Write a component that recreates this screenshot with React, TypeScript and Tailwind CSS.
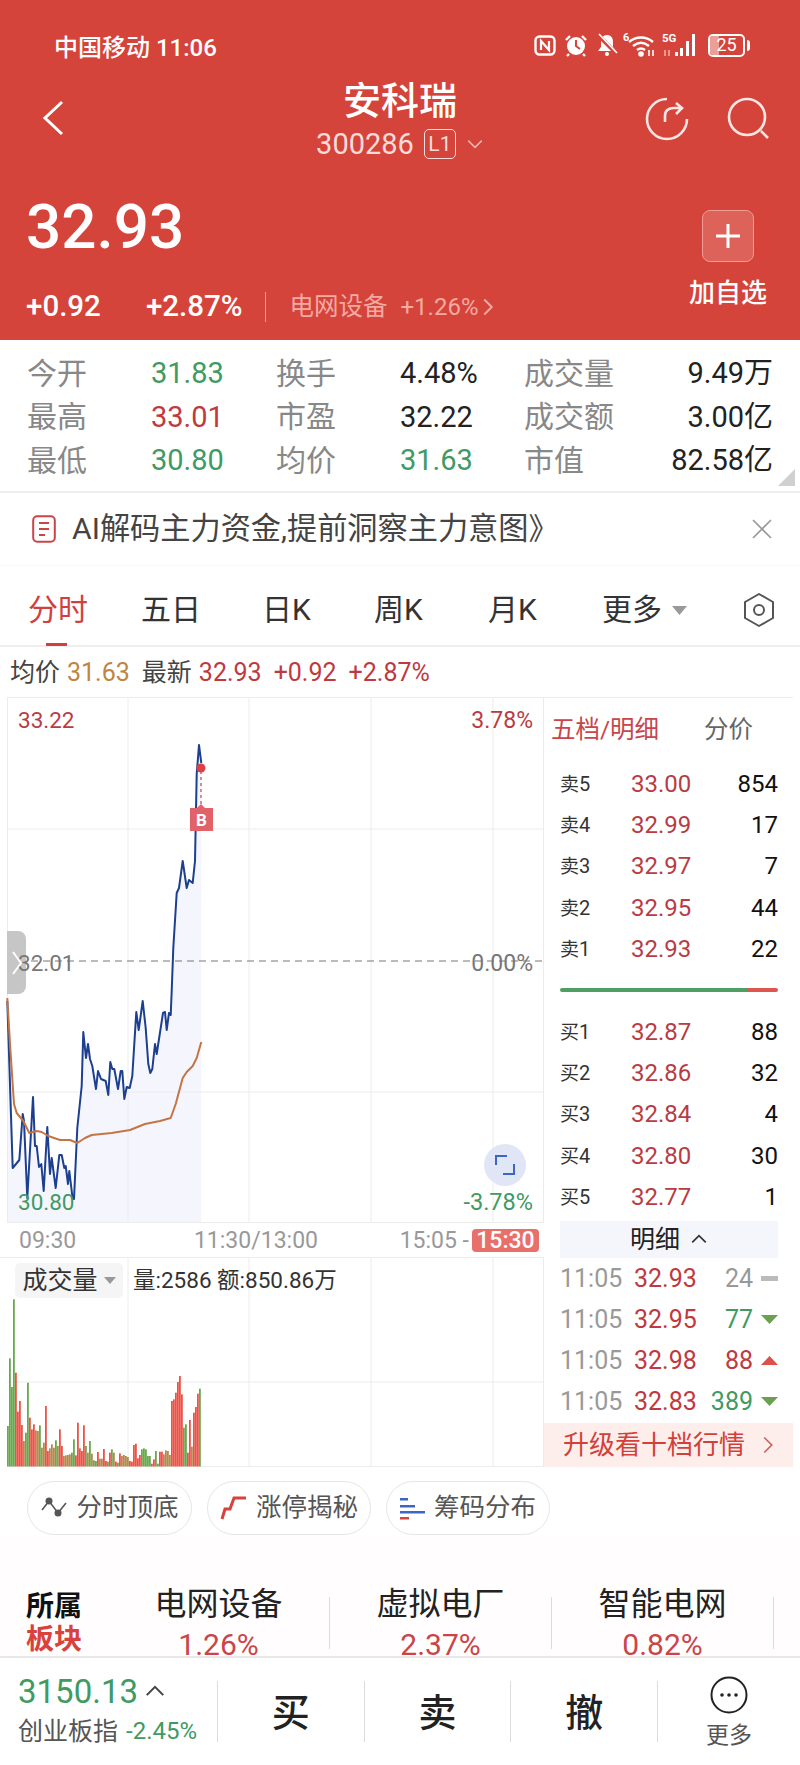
import { FC } from "react";

const blueLine =
  "7.3,1000 12.7,1167 16,1163 19.3,1159 22.7,1113 24,1120 27.3,1197 33,1096 35,1145 36.7,1145 39,1166 41.3,1163 43.7,1190 47.3,1126 50,1173 51.7,1157 55.7,1187 59.3,1154 61.7,1154 64.3,1167 65.7,1165 68,1183 69.3,1170 72.7,1198 74,1198 77.3,1127 81.7,1085 83.3,1031 86,1057 88,1043 90,1058 92.3,1065 96,1088 98,1070 101,1078 105.7,1080 108.3,1094 110.3,1061 112.3,1068 114.3,1068 118,1088 120.7,1070 122.3,1070 124.3,1098 126.7,1086 129.7,1087 132.3,1075 136.3,1011 138.7,1029 142.7,1000 145.7,1027 148.3,1063 150.3,1072 152.3,1068 155,1043 156.7,1053 163,1012 165,1011 166.7,1029 169,1012 170.7,1014 171.7,990 173.3,947 176.7,892 179,887 182.7,860 186.7,887 189,879 192.7,882 195,860 196.7,773 199,744 201.3,762";

const avgLine =
  "7.3,997 10,1043 14,1103 16.7,1112 23.3,1120 29.3,1132 36.7,1130 41.7,1131 48.3,1135 60,1139 70,1139 77.3,1142 85,1137 91.7,1134 111.7,1132 130,1129 145,1123 160,1120 170.7,1117 175.7,1103 182.7,1077 186.7,1071 192.7,1065 196.7,1057 201.3,1041";

// [top measured on the volume pane, colour]
const volumes: [number, string][] = [
  [615, "g"], [412, "g"], [498, "g"], [235, "g"], [455, "r"], [572, "r"], [540, "r"], [612, "r"], [660, "b"], [635, "g"],
  [485, "g"], [590, "r"], [625, "r"], [610, "r"], [628, "b"], [630, "b"], [613, "g"], [680, "b"], [665, "b"], [555, "r"],
  [690, "r"], [682, "b"], [670, "b"], [680, "b"], [658, "g"], [675, "b"], [625, "r"], [675, "r"], [705, "b"], [703, "b"],
  [702, "b"], [700, "b"], [695, "g"], [655, "g"], [703, "r"], [605, "r"], [682, "r"], [690, "r"], [613, "r"], [675, "g"],
  [695, "b"], [660, "g"], [698, "b"], [718, "g"], [720, "g"], [693, "r"], [713, "b"], [713, "b"], [684, "r"], [720, "r"],
  [722, "g"], [695, "r"], [685, "g"], [695, "b"], [722, "r"], [725, "g"], [697, "r"], [705, "b"], [702, "b"], [705, "b"],
  [708, "b"], [720, "r"], [722, "r"], [672, "r"], [668, "r"], [712, "r"], [702, "r"], [685, "g"], [682, "g"], [685, "g"],
  [705, "g"], [705, "g"], [728, "r"], [715, "r"], [690, "g"], [728, "g"], [692, "r"], [692, "r"], [700, "b"], [688, "b"],
  [690, "b"], [702, "b"], [540, "r"], [535, "r"], [515, "r"], [483, "r"], [465, "r"], [520, "r"], [620, "g"], [610, "g"],
  [695, "r"], [597, "r"], [677, "b"], [575, "r"], [558, "r"], [518, "r"], [503, "g"],
];

const barColors: Record<string, string> = { g: "#68a84e", r: "#ee5245", b: "#b58a4c" };

const stats = [
  ["今开", "31.83", "text-[#3f9a63]", "换手", "4.48%", "text-[#222]", "成交量", "9.49万"],
  ["最高", "33.01", "text-[#c0393f]", "市盈", "32.22", "text-[#222]", "成交额", "3.00亿"],
  ["最低", "30.80", "text-[#3f9a63]", "均价", "31.63", "text-[#3f9a63]", "市值", "82.58亿"],
];

const sellRows = [
  ["卖", "5", "33.00", "854"],
  ["卖", "4", "32.99", "17"],
  ["卖", "3", "32.97", "7"],
  ["卖", "2", "32.95", "44"],
  ["卖", "1", "32.93", "22"],
];

const buyRows = [
  ["买", "1", "32.87", "88"],
  ["买", "2", "32.86", "32"],
  ["买", "3", "32.84", "4"],
  ["买", "4", "32.80", "30"],
  ["买", "5", "32.77", "1"],
];

const ticks = [
  { price: "32.93", qty: "24", kind: "flat" },
  { price: "32.95", qty: "77", kind: "down" },
  { price: "32.98", qty: "88", kind: "up" },
  { price: "32.83", qty: "389", kind: "down" },
];

const StatusIcons: FC = () => (
  <div className="flex items-center">
    <svg width="22" height="21" viewBox="0 0 22 21" className="mr-[8px]">
      <rect x="1.500" y="1.500" width="19" height="18" rx="4" fill="none" stroke="white" strokeWidth="2.400" />
      <path d="M7 15V6l8 9V6" fill="none" stroke="white" strokeWidth="2.200" />
    </svg>
    <svg width="24" height="23" viewBox="0 0 24 23" className="mr-[8px]">
      <circle cx="12" cy="12" r="9" fill="white" />
      <path d="M12 6v6l4 3" fill="none" stroke="#d5443a" strokeWidth="2" />
      <path d="M2 6l4-4M22 6l-4-4M5 20l-2 2M19 20l2 2" stroke="white" strokeWidth="2.400" />
    </svg>
    <svg width="22" height="24" viewBox="0 0 22 24" className="mr-[5px]">
      <path d="M11 2c-4 0-6 3-6 7v5l-3 4h18l-3-4V9c0-4-2-7-6-7z" fill="white" />
      <circle cx="11" cy="21" r="2" fill="white" />
      <path d="M2 2l19 19" stroke="#d5443a" strokeWidth="4" />
      <path d="M3 1l18 19" stroke="white" strokeWidth="1.600" />
    </svg>
    <svg width="33" height="26" viewBox="0 0 33 26" className="mr-[6px]">
      <text x="0" y="9" fontSize="11" fontWeight="700" fill="white" fontFamily="Roboto">6</text>
      <path d="M6 10c7-6 17-6 24 0M10 14c5-4 11-4 16 0M14 18c2.500-2 5.500-2 8 0" fill="none" stroke="white" strokeWidth="2.400" />
      <circle cx="18" cy="22" r="2.800" fill="white" />
      <path d="M26 24v-6M30 24v-6" stroke="white" strokeWidth="1.600" />
    </svg>
    <svg width="37" height="26" viewBox="0 0 37 26" className="mr-[9px]">
      <text x="0" y="10" fontSize="11.500" fontWeight="700" fill="white" fontFamily="Roboto">5G</text>
      <path d="M3 24v-6M7 24v-6" stroke="#f0a9a3" strokeWidth="1.600" />
      <rect x="13" y="20" width="3" height="4" fill="white" />
      <rect x="18" y="16" width="3" height="8" fill="white" />
      <rect x="24" y="9" width="3" height="15" fill="white" />
      <rect x="30" y="2" width="3" height="22" fill="white" />
    </svg>
    <div className="flex items-center">
      <div className="relative flex h-[23px] w-[37px] items-center justify-center overflow-hidden rounded-[5px] border-2 border-white">
        <div className="absolute top-0 bottom-0 left-0 w-[9px] bg-[#ec9f97]" />
        <span className="relative text-[18px] leading-none text-white">25</span>
      </div>
      <div className="ml-[2px] h-[11px] w-[3px] rounded-r-sm bg-white" />
    </div>
  </div>
);

const Triangle: FC<{ color: string; up?: boolean; w?: number; h?: number }> = ({ color, up, w = 16, h = 8 }) => (
  <svg width={w} height={h} viewBox="0 0 16 8" preserveAspectRatio="none">
    <polygon points={up ? "8,0 16,8 0,8" : "0,0 16,0 8,8"} fill={color} />
  </svg>
);

const Chevron: FC<{ dir: "right" | "down" | "up"; color: string; size?: number; width?: number }> = ({
  dir,
  color,
  size = 16,
  width = 1.6,
}) => {
  const points = dir === "right" ? "5,2 11,8 5,14" : dir === "down" ? "2,5 8,11 14,5" : "2,11 8,5 14,11";
  return (
    <svg width={size} height={size} viewBox="0 0 16 16">
      <polyline points={points} fill="none" stroke={color} strokeWidth={width} />
    </svg>
  );
};

const Chip: FC<{ label: string; icon: React.ReactNode; width: string }> = ({ label, icon, width }) => (
  <div className={`flex h-[54px] items-center justify-center gap-[8px] rounded-full border border-[#e6e6e6] ${width}`}>
    {icon}
    <span className="text-[25.500px] leading-none text-[#555]">{label}</span>
  </div>
);

const OrderRow: FC<{ row: string[] }> = ({ row }) => (
  <div className="grid h-[41.400px] grid-cols-[71px_1fr_auto] items-center">
    <div className="flex items-baseline text-[#333]">
      <span className="text-[19px] leading-none">{row[0]}</span>
      <span className="text-[20px] leading-none">{row[1]}</span>
    </div>
    <span className="text-[24px] leading-none text-[#b83c42]">{row[2]}</span>
    <span className="text-[24px] leading-none text-[#111]">{row[3]}</span>
  </div>
);

const App: FC = () => {
  return (
    <div className="flex h-[1765px] w-[800px] flex-col overflow-hidden bg-white font-['Roboto','Noto_Sans_CJK_SC',sans-serif]">
      {/* Red quote header */}
      <div className="h-[340px] bg-[#d5443a] text-white">
        <div className="flex h-[75px] items-end justify-between pr-[50px] pl-[54px]">
          <span className="pb-[15px] text-[24px] leading-none font-medium">中国移动 11:06</span>
          <div className="pb-[17px]">
            <StatusIcons />
          </div>
        </div>

        <div className="grid h-[90px] grid-cols-[1fr_auto_1fr] items-start px-[29px]">
          <svg width="22" height="36" viewBox="0 0 22 36" className="mt-[25px] ml-[13px]">
            <polyline points="20,2 3,18 20,34" fill="none" stroke="white" strokeWidth="3" />
          </svg>
          <div className="flex flex-col items-center">
            <span className="flex h-[52px] items-center text-[38px] leading-none font-medium">安科瑞</span>
            <div className="flex h-[34px] items-center text-[#f8dcd9]">
              <span className="text-[29px] leading-none">300286</span>
              <span className="mx-[10px] flex h-[30px] w-[32px] items-center justify-center rounded-[5px] border border-[#f8dcd9] text-[21px] leading-none">
                L1
              </span>
              <Chevron dir="down" color="#f0b8b2" size={18} width={1.3} />
            </div>
          </div>
          <div className="mt-[22px] flex items-center justify-end gap-[38px]">
            <svg width="44" height="44" viewBox="0 0 44 44">
              <path d="M22 2A20 20 0 1 0 42 22" fill="none" stroke="#fbe6e3" strokeWidth="2.600" />
              <path d="M20 25v-6q0-8 9-8h7M31 6l6 5-6 6" fill="none" stroke="#fbe6e3" strokeWidth="2.600" />
            </svg>
            <svg width="44" height="44" viewBox="0 0 44 44">
              <circle cx="20" cy="20" r="18" fill="none" stroke="#fbe6e3" strokeWidth="2.600" />
              <path d="M34 34l7 7" stroke="#fbe6e3" strokeWidth="2.600" />
            </svg>
          </div>
        </div>

        <div className="flex h-[175px] justify-between pr-[33px] pl-[26px]">
          <div className="flex flex-col">
            <span className="mt-[31px] h-[61px] text-[62px] leading-[61px] font-medium">32.93</span>
            <div className="mt-[33px] flex h-[34px] items-center">
              <span className="text-[29.500px] leading-none font-medium">+0.92</span>
              <span className="ml-[45px] text-[29.500px] leading-none font-medium">+2.87%</span>
              <div className="mr-[23px] ml-[23px] h-[30px] w-px bg-[#ea9c95]" />
              <span className="text-[24.500px] leading-none text-[#f3aaa3]">电网设备</span>
              <span className="ml-[13px] text-[24px] leading-none text-[#f3aaa3]">+1.26%</span>
              <Chevron dir="right" color="#f3aaa3" size={20} />
            </div>
          </div>
          <div className="flex flex-col items-center">
            <div className="mt-[45px] flex h-[52px] w-[52px] items-center justify-center rounded-[8px] border border-[#ee9c95] bg-[#dd625a]">
              <svg width="26" height="26" viewBox="0 0 26 26">
                <path d="M13 1v24M1 13h24" stroke="white" strokeWidth="3" />
              </svg>
            </div>
            <span className="mt-[18px] text-[26px] leading-none font-medium">加自选</span>
          </div>
        </div>
      </div>

      {/* Stats */}
      <div className="relative h-[153px] border-b-2 border-[#eeeeee] pt-[12px] pl-[27px]">
        {stats.map((r) => (
          <div key={r[0]} className="grid h-[43.500px] w-[746px] grid-cols-[124px_125px_124px_124px_1fr_auto] items-center text-[29px] leading-none">
            <span className="text-[30px] text-[#888]">{r[0]}</span>
            <span className={r[2]}>{r[1]}</span>
            <span className="text-[30px] text-[#888]">{r[3]}</span>
            <span className={r[5]}>{r[4]}</span>
            <span className="text-[30px] text-[#888]">{r[6]}</span>
            <span className="text-[#222]">{r[7]}</span>
          </div>
        ))}
        <svg width="17" height="17" viewBox="0 0 17 17" className="absolute right-[5px] bottom-[5px]">
          <polygon points="17,0 17,17 0,17" fill="#d0d0d0" />
        </svg>
      </div>

      {/* Notice */}
      <div className="flex h-[73px] items-center justify-between border-b border-[#f9f9f9] pr-[28px] pl-[32px]">
        <div className="flex items-center">
          <svg width="24" height="28" viewBox="0 0 24 28">
            <rect x="1.200" y="1.200" width="21.600" height="25.600" rx="4" fill="none" stroke="#c9454a" strokeWidth="2" />
            <path d="M7 8h10M7 14h10M7 20h6" stroke="#c9454a" strokeWidth="2" />
          </svg>
          <span className="ml-[16px] text-[30.200px] leading-none text-[#444]">AI解码主力资金,提前洞察主力意图》</span>
        </div>
        <svg width="20" height="20" viewBox="0 0 20 20">
          <path d="M1 1l18 18M19 1L1 19" stroke="#999" strokeWidth="1.600" />
        </svg>
      </div>

      {/* Period tabs */}
      <div className="relative grid h-[81px] grid-cols-[113px_121px_112px_114px_114px_141px_auto] items-center border-b-2 border-[#eeeeee] pt-[9px] pl-[28px] text-[30px] leading-none text-[#333]">
        <span className="text-[#d1403f]">分时</span>
        <span>五日</span>
        <span>日K</span>
        <span>周K</span>
        <span>月K</span>
        <div className="flex items-center gap-[10px]">
          <span>更多</span>
          <Triangle color="#999" w={15} h={9} />
        </div>
        <svg width="32" height="34" viewBox="0 0 32 34">
          <polygon points="16,1 30,9 30,25 16,33 2,25 2,9" fill="none" stroke="#555" strokeWidth="2" strokeLinejoin="round" />
          <circle cx="16" cy="17" r="5" fill="none" stroke="#555" strokeWidth="2" />
        </svg>
        <div className="absolute bottom-[-1px] left-[46px] h-[3px] w-[21px] bg-[#d1403f]" />
      </div>

      {/* Last quote line */}
      <div className="flex h-[50px] items-center pl-[10px] text-[25px] leading-none">
        <span className="text-[#444]">均价</span>
        <span className="ml-[7px] text-[#c0853f]">31.63</span>
        <span className="ml-[12px] text-[#444]">最新</span>
        <span className="ml-[7px] text-[#c0393f]">32.93</span>
        <span className="ml-[12px] text-[#c0393f]">+0.92</span>
        <span className="ml-[12px] text-[#c0393f]">+2.87%</span>
      </div>

      <div className="flex h-[770px]">
        {/* Chart column */}
        <div className="w-[544px]">
          <div className="relative h-[526px]">
            <svg width="544" height="526" viewBox="0 696 544 526" className="block">
              <polygon points={`7.300,1221 ${blueLine} 201.300,1221`} fill="#f5f6fd" />
              {[7.5, 128, 249, 371, 493, 543.5].map((x) => (
                <line key={x} x1={x} x2={x} y1="696" y2="1222" stroke="#ececec" strokeWidth="1" />
              ))}
              {[696.5, 828, 1091, 1221.5].map((y) => (
                <line key={y} x1="7" x2="544" y1={y} y2={y} stroke="#ececec" strokeWidth="1" />
              ))}
              <line x1="7" x2="544" y1="960" y2="960" stroke="#777" strokeWidth="1" strokeDasharray="7 5" />
              <polyline points={blueLine} fill="none" stroke="#1d3f8f" strokeWidth="2" strokeLinejoin="round" />
              <polyline points={avgLine} fill="none" stroke="#c47546" strokeWidth="2" strokeLinejoin="round" />
              <line x1="201" x2="201" y1="770" y2="806" stroke="#b04a55" strokeWidth="1.200" strokeDasharray="3 3" />
              <circle cx="201" cy="767" r="4.500" fill="#e0403f" />
              <polygon points="190,807 197,807 201,803 205,807 213,807 213,830 190,830" fill="#e2626a" />
              <text x="201.500" y="825" textAnchor="middle" fontSize="17" fontWeight="700" fill="white" fontFamily="Roboto">B</text>
            </svg>

            <span className="absolute top-[12px] left-[18px] text-[22.500px] leading-none text-[#b83c42]">33.22</span>
            <span className="absolute top-[12px] right-[11px] text-[23px] leading-none text-[#b83c42]">3.78%</span>
            <div className="absolute top-[234px] left-[7px] flex h-[63px] w-[19px] items-center justify-center rounded-r-[8px] bg-[#c6c6c6]">
              <svg width="10" height="24" viewBox="0 0 10 24">
                <polyline points="1,1 9,12 1,23" fill="none" stroke="white" strokeWidth="2" />
              </svg>
            </div>
            <span className="absolute top-[255px] left-[18px] text-[22.500px] leading-none text-[#777]">32.01</span>
            <span className="absolute top-[255px] right-[11px] text-[23px] leading-none text-[#777]">0.00%</span>
            <span className="absolute top-[494px] left-[18px] text-[22.500px] leading-none text-[#3f9a63]">30.80</span>
            <span className="absolute top-[494px] right-[11px] text-[23.500px] leading-none text-[#3f9a63]">-3.78%</span>
            <div className="absolute top-[447px] left-[484px] flex h-[42px] w-[42px] items-center justify-center rounded-full bg-[#e1e6f7]">
              <svg width="20" height="20" viewBox="0 0 20 20">
                <path d="M1 10V1h11M19 9v10H8" fill="none" stroke="#3b66c4" strokeWidth="2" />
              </svg>
            </div>
          </div>

          <div className="flex h-[35px] items-center justify-between border-b border-[#ececec] pr-[5px] pl-[19px] text-[23px] leading-none text-[#999]">
            <span>09:30</span>
            <span className="ml-[36px]">11:30/13:00</span>
            <div className="flex items-center">
              <span>15:05 -</span>
              <span className="ml-[3px] flex h-[23px] w-[67px] items-center justify-center rounded-[4px] bg-[#e96f6a] font-medium text-white">15:30</span>
            </div>
          </div>

          <div className="relative h-[209px]">
            <svg width="544" height="209" viewBox="0 1257 544 209" className="block">
              {[128, 249, 371, 493, 543.5].map((x) => (
                <line key={x} x1={x} x2={x} y1="1257" y2="1465" stroke="#ececec" strokeWidth="1" />
              ))}
              <line x1="7" x2="544" y1="1381" y2="1381" stroke="#ececec" strokeWidth="1" />
              <line x1="7" x2="544" y1="1465.500" y2="1465.500" stroke="#ececec" strokeWidth="1" />
              {volumes.map(([top, c], i) => {
                const y = 1220 + top / 3;
                return <rect key={i} x={7 + i * 2} y={y} width="1.800" height={1465.5 - y} fill={barColors[c]} />;
              })}
            </svg>
            <div className="absolute top-[5px] left-[15px] flex h-[35px] w-[108px] items-center justify-center gap-[6px] rounded-[5px] bg-[#f5f5f5]">
              <span className="text-[25px] leading-none text-[#333]">成交量</span>
              <Triangle color="#999" w={12} h={7} />
            </div>
            <span className="absolute top-[11px] left-[133px] text-[22.500px] leading-none text-[#333]">量:2586 额:850.86万</span>
          </div>
        </div>

        {/* Order book column */}
        <div className="flex w-[249px] flex-col border-t border-[#ececec]">
          <div className="flex h-[65px] shrink-0 items-center pl-[7px] text-[24.500px] leading-none">
            <span className="text-[#c9454a]">五档/明细</span>
            <span className="ml-[45px] text-[#666]">分价</span>
          </div>
          <div className="mr-[15px] ml-[16px]">
            {sellRows.map((r) => (
              <OrderRow key={r[1]} row={r} />
            ))}
            <div className="mt-[18px] mb-[19px] flex h-[4px] overflow-hidden rounded-full">
              <div className="w-[188px] bg-[#4f9e63]" />
              <div className="flex-1 bg-[#de5550]" />
            </div>
            {buyRows.map((r) => (
              <OrderRow key={r[1]} row={r} />
            ))}
            <div className="mt-[3px] flex h-[37px] items-center justify-center gap-[10px] bg-[#f5f5fc] text-[25px] leading-none text-[#222]">
              <span>明细</span>
              <Chevron dir="up" color="#333" size={18} width={1.500} />
            </div>
            {ticks.map((t, i) => (
              <div key={i} className="grid h-[41px] grid-cols-[74px_auto_1fr_25px] items-center text-[25px] leading-none">
                <span className="text-[#999]">11:05</span>
                <span className="text-[#c0393f]">{t.price}</span>
                <span
                  className={`text-right ${t.kind === "flat" ? "text-[#999]" : t.kind === "down" ? "text-[#3f9a63]" : "text-[#c0393f]"}`}
                >
                  {t.qty}
                </span>
                <div className="flex justify-end">
                  {t.kind === "flat" ? (
                    <div className="h-[5px] w-[17px] bg-[#bbb]" />
                  ) : t.kind === "down" ? (
                    <Triangle color="#6aa04f" w={17} h={9} />
                  ) : (
                    <Triangle color="#e0504a" up w={17} h={9} />
                  )}
                </div>
              </div>
            ))}
          </div>
          <div className="mt-[1px] flex h-[44px] shrink-0 items-center justify-between bg-[#fdeeec] pr-[15px] pl-[19px]">
            <span className="text-[26px] leading-none text-[#d33f3a]">升级看十档行情</span>
            <Chevron dir="right" color="#c9605c" size={20} width={1.300} />
          </div>
        </div>
      </div>

      {/* Shortcut chips */}
      <div className="flex h-[68px] shrink-0 items-end gap-[15px] pl-[27px]">
        <Chip
          label="分时顶底"
          width="w-[165px]"
          icon={
            <svg width="28" height="24" viewBox="0 0 28 24">
              <polyline points="2,14 9,5 18,17 26,7" fill="none" stroke="#555" strokeWidth="1.600" />
              <circle cx="9" cy="5" r="3.500" fill="#555" />
              <circle cx="18" cy="17" r="3.500" fill="#555" />
            </svg>
          }
        />
        <Chip
          label="涨停揭秘"
          width="w-[164px]"
          icon={
            <svg width="28" height="26" viewBox="0 0 28 26">
              <path d="M2 24l3-10h5l4-11h12" fill="none" stroke="#d9413c" strokeWidth="3" />
            </svg>
          }
        />
        <Chip
          label="筹码分布"
          width="w-[164px]"
          icon={
            <svg width="26" height="24" viewBox="0 0 26 24">
              <rect x="0" y="2" width="8" height="2.500" fill="#3b66c4" />
              <rect x="0" y="9" width="15" height="2.500" fill="#3b66c4" />
              <rect x="0" y="15" width="25" height="2.500" fill="#3b66c4" />
              <rect x="0" y="21" width="9" height="2.500" fill="#d9413c" />
            </svg>
          }
        />
      </div>

      {/* Related sectors, cut off by the bottom bar */}
      <div className="flex h-[121px] shrink-0 overflow-hidden bg-[#fffdfd]">
        <div className="flex w-[108px] flex-col pt-[58px] pl-[26px] text-[28px] leading-none font-bold">
          <span className="h-[33px] text-[#111]">所属</span>
          <span className="text-[#d9413c]">板块</span>
        </div>
        {[
          ["电网设备", "1.26%"],
          ["虚拟电厂", "2.37%"],
          ["智能电网", "0.82%"],
        ].map(([name, pct]) => (
          <div key={name} className="flex w-[222px]">
            <div className="flex flex-1 flex-col items-center pt-[53px]">
              <span className="text-[32px] leading-none text-[#222]">{name}</span>
              <span className="mt-[10px] text-[30px] leading-none text-[#c9454a]">{pct}</span>
            </div>
            <div className="mt-[62px] h-[52px] w-px bg-[#dcdcdc]" />
          </div>
        ))}
      </div>

      {/* Bottom trade bar */}
      <div className="flex h-[109px] shrink-0 items-center border-t-2 border-[#e8e8e8] bg-white">
        <div className="flex w-[217px] flex-col pb-[5px] pl-[18px]">
          <div className="flex items-center">
            <span className="text-[33px] leading-none text-[#3f9a63]">3150.13</span>
            <span className="ml-[6px]">
              <Chevron dir="up" color="#444" size={22} width={1.500} />
            </span>
          </div>
          <div className="mt-[11px] flex items-center">
            <span className="text-[25px] leading-none text-[#555]">创业板指</span>
            <span className="ml-[8px] text-[24px] leading-none text-[#3f9a63]">-2.45%</span>
          </div>
        </div>
        {["买", "卖", "撤"].map((c) => (
          <div key={c} className="flex w-[147px] items-center">
            <div className="h-[61px] w-px bg-[#dcdcdc]" />
            <span className="flex-1 pt-[2px] text-center text-[38px] leading-none font-medium text-[#222]">{c}</span>
          </div>
        ))}
        <div className="h-[61px] w-px bg-[#dcdcdc]" />
        <div className="flex w-[142px] flex-col items-center">
          <svg width="38" height="38" viewBox="0 0 38 38">
            <circle cx="19" cy="19" r="17.500" fill="none" stroke="#222" strokeWidth="2" />
            <circle cx="12" cy="19" r="1.800" fill="#222" />
            <circle cx="19" cy="19" r="1.800" fill="#222" />
            <circle cx="26" cy="19" r="1.800" fill="#222" />
          </svg>
          <span className="mt-[10px] text-[23px] leading-none text-[#555]">更多</span>
        </div>
      </div>
    </div>
  );
};

export default App;
